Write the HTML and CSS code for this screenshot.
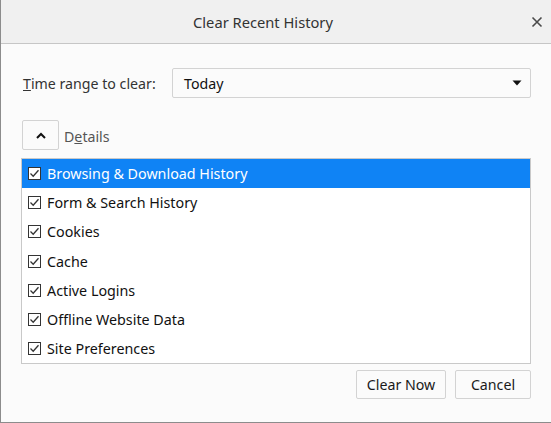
FILE: index.html
```html
<!DOCTYPE html>
<html lang="en">
<head>
<meta charset="utf-8">
<title>Clear Recent History</title>
<link rel="stylesheet" href="styles.css">
</head>
<body>
<div class="dialog">
  <div class="titlebar">
    <span></span>
    <span class="title">Clear Recent History</span>
    <span class="close">
      <svg width="12" height="12" viewBox="0 0 12 12"><path d="M1.5 1.5 L10.5 10.5 M10.5 1.5 L1.5 10.5" stroke="#4a4a4a" stroke-width="1.6" fill="none"/></svg>
    </span>
  </div>
  <div class="content">
    <div class="range-row">
      <span class="label"><u>T</u>ime range to clear:</span>
      <div class="select">
        <span>Today</span>
        <svg width="10" height="6" viewBox="0 0 10 6"><path d="M0.5 0.5 H9.5 L5 5.5 Z" fill="#111"/></svg>
      </div>
    </div>
    <div class="details-row">
      <button class="toggle">
        <svg width="10" height="7" viewBox="0 0 10 7"><path d="M1 6 L5 2 L9 6" stroke="#111" stroke-width="2" fill="none"/></svg>
      </button>
      <span class="details-label">D<u>e</u>tails</span>
    </div>
    <div class="list">
      <div class="item selected"><span class="cb"><svg width="11" height="11" viewBox="0 0 11 11"><path d="M1.5 5.5 L4.2 8.2 L9.5 2.2" stroke="#333" stroke-width="1.3" fill="none"/></svg></span>Browsing &amp; Download History</div>
      <div class="item"><span class="cb"><svg width="11" height="11" viewBox="0 0 11 11"><path d="M1.5 5.5 L4.2 8.2 L9.5 2.2" stroke="#333" stroke-width="1.3" fill="none"/></svg></span>Form &amp; Search History</div>
      <div class="item"><span class="cb"><svg width="11" height="11" viewBox="0 0 11 11"><path d="M1.5 5.5 L4.2 8.2 L9.5 2.2" stroke="#333" stroke-width="1.3" fill="none"/></svg></span>Cookies</div>
      <div class="item"><span class="cb"><svg width="11" height="11" viewBox="0 0 11 11"><path d="M1.5 5.5 L4.2 8.2 L9.5 2.2" stroke="#333" stroke-width="1.3" fill="none"/></svg></span>Cache</div>
      <div class="item"><span class="cb"><svg width="11" height="11" viewBox="0 0 11 11"><path d="M1.5 5.5 L4.2 8.2 L9.5 2.2" stroke="#333" stroke-width="1.3" fill="none"/></svg></span>Active Logins</div>
      <div class="item"><span class="cb"><svg width="11" height="11" viewBox="0 0 11 11"><path d="M1.5 5.5 L4.2 8.2 L9.5 2.2" stroke="#333" stroke-width="1.3" fill="none"/></svg></span>Offline Website Data</div>
      <div class="item"><span class="cb"><svg width="11" height="11" viewBox="0 0 11 11"><path d="M1.5 5.5 L4.2 8.2 L9.5 2.2" stroke="#333" stroke-width="1.3" fill="none"/></svg></span>Site Preferences</div>
    </div>
    <div class="actions">
      <button class="btn btn-clear">Clear Now</button>
      <button class="btn btn-cancel">Cancel</button>
    </div>
  </div>
</div>
</body>
</html>
```
FILE: styles.css
```css
html, body {
  margin: 0;
  padding: 0;
}
body {
  background: #fbfbfb;
  font-family: "Noto Sans", "Open Sans", sans-serif;
  font-size: 14px;
  color: #1a1a1a;
}
.dialog {
  width: 551px;
  height: 423px;
  box-sizing: border-box;
  border-left: 1px solid #8c8c8c;
  border-bottom: 1px solid #8c8c8c;
  background: #fbfbfb;
  display: flex;
  flex-direction: column;
}
.titlebar {
  height: 44px;
  box-sizing: border-box;
  background: #f0f0f0;
  border-bottom: 1px solid #c6c6c6;
  display: grid;
  grid-template-columns: 1fr auto 1fr;
  align-items: center;
}
.title {
  font-size: 14.7px;
  color: #333;
  padding-right: 26px;
}
.close {
  justify-self: end;
  padding-right: 8px;
  display: flex;
  align-items: center;
}
.content {
  padding: 24px 20px 0 20px;
  display: flex;
  flex-direction: column;
}
.range-row {
  display: flex;
  align-items: center;
  height: 30px;
}
.label {
  width: 149px;
  padding-left: 2px;
  color: #333;
  font-size: 14.2px;
}
.select {
  flex: 1;
  height: 30px;
  box-sizing: border-box;
  border: 1px solid #d3d3d3;
  border-radius: 2px;
  background: #fbfbfb;
  display: flex;
  align-items: center;
  justify-content: space-between;
  padding: 0 8px 0 11px;
  color: #111;
  font-size: 14.2px;
}
.details-row {
  margin-top: 22px;
  display: flex;
  align-items: center;
}
.toggle {
  width: 37px;
  height: 30px;
  margin-left: 1px;
  box-sizing: border-box;
  border: 1px solid #d3d3d3;
  background: #fbfbfb;
  border-radius: 2px;
  display: flex;
  align-items: center;
  justify-content: center;
  padding: 0;
}
.details-label {
  margin-left: 5px;
  margin-top: 2px;
  color: #555;
  font-size: 14.2px;
}
.list {
  margin-top: 8px;
  border: 1px solid #c9c9c9;
  background: #fff;
}
.item {
  height: 29.2px;
  display: flex;
  align-items: center;
  padding-left: 6px;
  color: #111;
  font-size: 14.3px;
}
.item.selected {
  background: #0f83f5;
  color: #fff;
}
.cb {
  width: 13px;
  height: 13px;
  box-sizing: border-box;
  border: 1px solid #333;
  background: #fff;
  margin-right: 6px;
  display: flex;
  align-items: center;
  justify-content: center;
}
.actions {
  margin-top: 6px;
  display: flex;
  justify-content: flex-end;
  gap: 9px;
}
.btn {
  height: 29px;
  box-sizing: border-box;
  border: 1px solid #d3d3d3;
  border-radius: 2px;
  background: #fbfbfb;
  font-family: inherit;
  font-size: 14.2px;
  color: #1a1a1a;
  padding: 0;
}
.btn-clear {
  width: 90px;
}
.btn-cancel {
  width: 76px;
}
```
